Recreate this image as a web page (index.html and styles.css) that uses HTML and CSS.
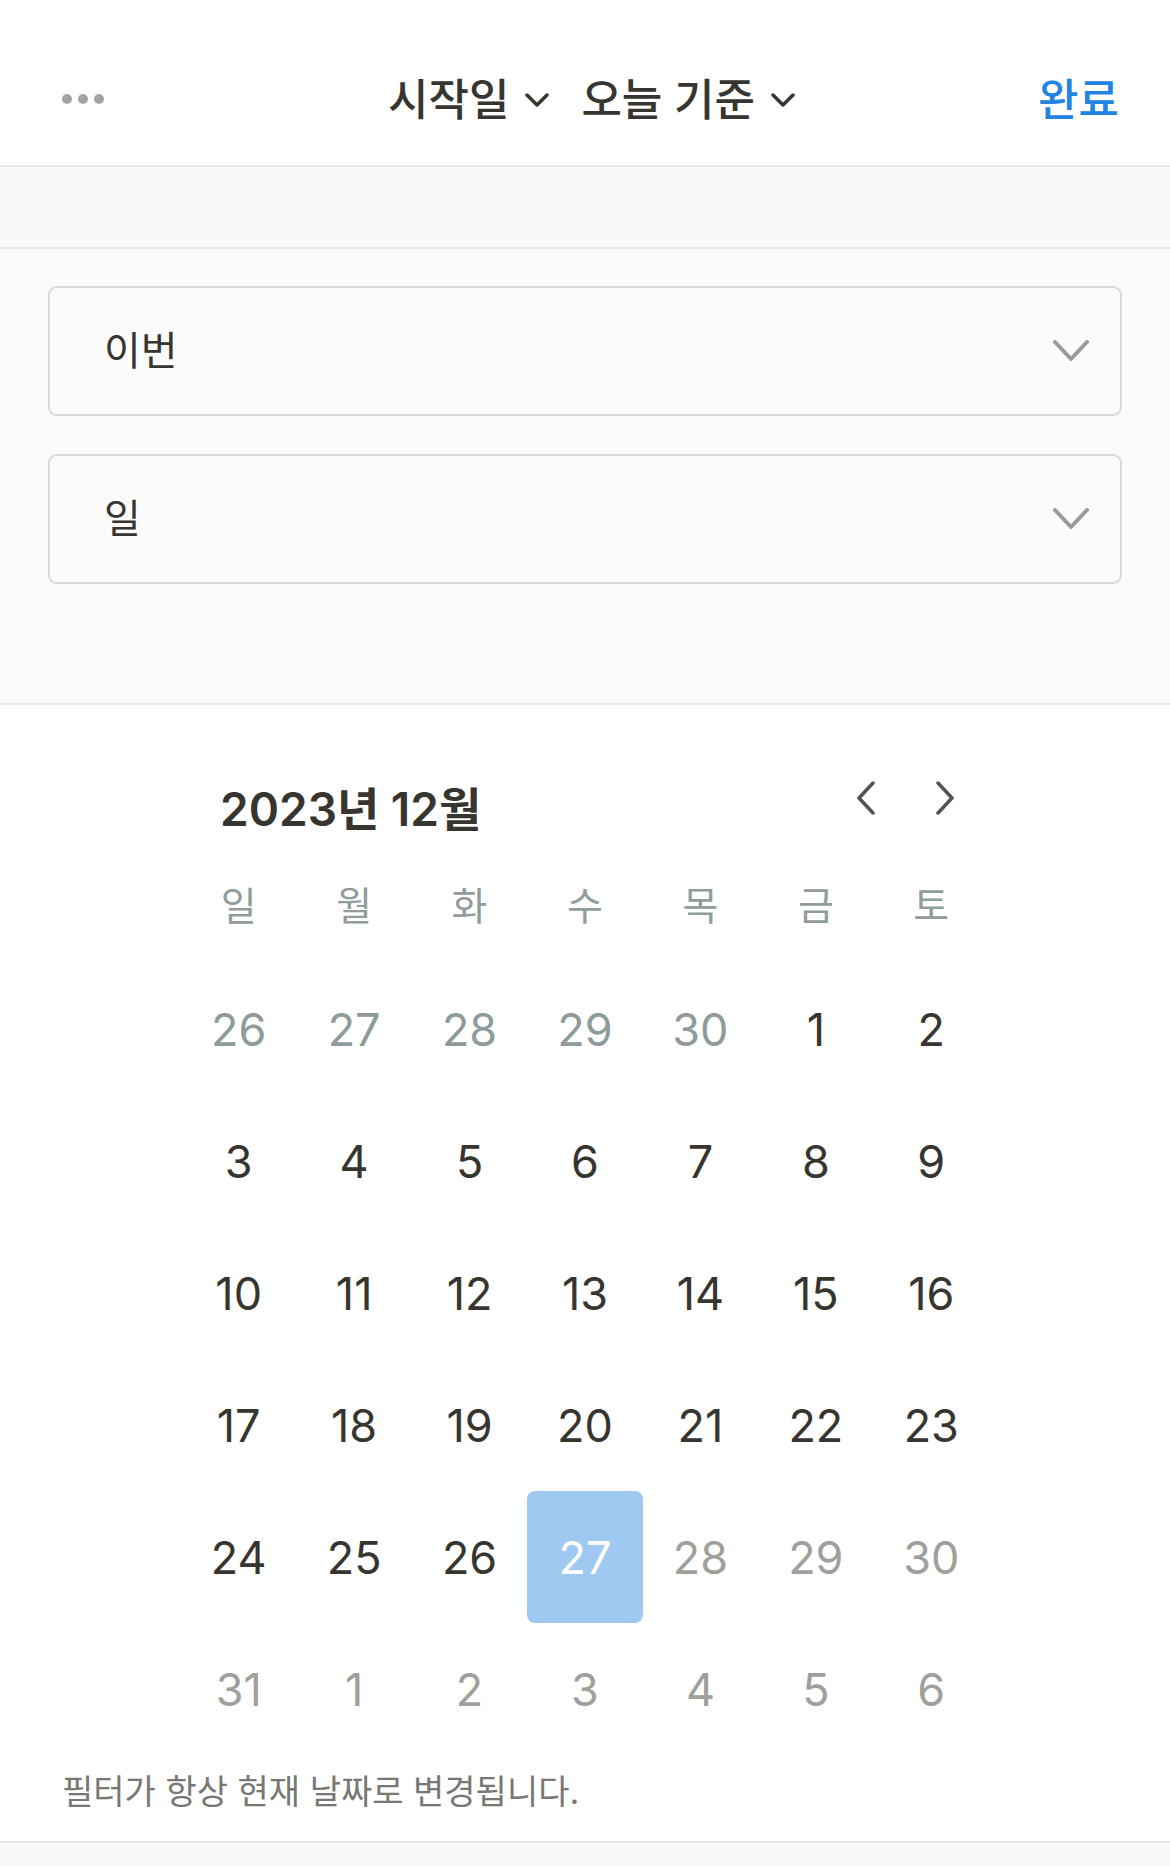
FILE: index.html
```html
<!DOCTYPE html>
<html lang="ko">
<head>
<meta charset="utf-8">
<title>시작일 필터</title>
<link rel="stylesheet" href="styles.css">
</head>
<body>
<div class="page">
  <header class="topbar">
    <div class="more" aria-label="더보기"><span></span><span></span><span></span></div>
    <div class="title">
      <span class="title-item">시작일<svg class="tchev" viewBox="0 0 24 14" width="24" height="14"><path d="M2 2 L12 12 L22 2"/></svg></span>
      <span class="title-item">오늘 기준<svg class="tchev" viewBox="0 0 24 14" width="24" height="14"><path d="M2 2 L12 12 L22 2"/></svg></span>
    </div>
    <div class="done">완료</div>
  </header>

  <div class="band"></div>

  <section class="selects">
    <div class="select">
      <span>이번</span>
      <svg class="schev" viewBox="0 0 36 22" width="36" height="22"><path d="M2 2 L18 19 L34 2"/></svg>
    </div>
    <div class="select">
      <span>일</span>
      <svg class="schev" viewBox="0 0 36 22" width="36" height="22"><path d="M2 2 L18 19 L34 2"/></svg>
    </div>
  </section>

  <section class="calendar">
    <div class="cal">
      <div class="cal-head">
        <div class="month">2023년 12월</div>
        <div class="nav">
          <svg viewBox="0 0 20 34" width="20" height="34"><path d="M17 2 L3 17 L17 32"/></svg>
          <svg viewBox="0 0 20 34" width="20" height="34"><path d="M3 2 L17 17 L3 32"/></svg>
        </div>
      </div>
      <div class="weekdays">
        <span>일</span><span>월</span><span>화</span><span>수</span><span>목</span><span>금</span><span>토</span>
      </div>
      <div class="days">
        <span class="prev">26</span><span class="prev">27</span><span class="prev">28</span><span class="prev">29</span><span class="prev">30</span><span>1</span><span>2</span>
        <span>3</span><span>4</span><span>5</span><span>6</span><span>7</span><span>8</span><span>9</span>
        <span>10</span><span>11</span><span>12</span><span>13</span><span>14</span><span>15</span><span>16</span>
        <span>17</span><span>18</span><span>19</span><span>20</span><span>21</span><span>22</span><span>23</span>
        <span>24</span><span>25</span><span>26</span><span class="sel">27</span><span class="next">28</span><span class="next">29</span><span class="next">30</span>
        <span class="next">31</span><span class="next">1</span><span class="next">2</span><span class="next">3</span><span class="next">4</span><span class="next">5</span><span class="next">6</span>
      </div>
    </div>
    <p class="note">필터가 항상 현재 날짜로 변경됩니다.</p>
  </section>

  <div class="bottom"></div>
</div>
</body>
</html>
```

FILE: styles.css
```css
html, body {
  margin: 0;
  padding: 0;
  background: #ffffff;
}
body {
  font-family: Inter, "Noto Sans CJK KR", sans-serif;
  color: #37352f;
}
.page {
  width: 1170px;
}

/* Top bar */
.topbar {
  box-sizing: border-box;
  height: 167px;
  padding: 35px 51px 0 62px;
  border-bottom: 2px solid #e9e9e7;
  display: grid;
  grid-template-columns: 1fr auto 1fr;
  align-items: center;
}
.more {
  display: flex;
  gap: 6px;
  justify-self: start;
  margin-top: -3px;
}
.more span {
  width: 10px;
  height: 10px;
  border-radius: 50%;
  background: #a5a4a0;
}
.title {
  display: flex;
  align-items: center;
  gap: 32px;
  font-size: 44px;
  font-weight: 500;
  line-height: 1;
  padding-left: 2px;
}
.title-item {
  display: flex;
  align-items: center;
  gap: 16px;
}
.tchev path {
  fill: none;
  stroke: #37352f;
  stroke-width: 3.5;
  stroke-linecap: round;
  stroke-linejoin: round;
}
.done {
  justify-self: end;
  font-size: 44px;
  font-weight: 500;
  color: #2383e2;
  line-height: 1;
}

/* Grey band */
.band {
  height: 80px;
  background: #f9f9f9;
  border-bottom: 2px solid #e9e9e7;
}

/* Selects */
.selects {
  background: #fafafa;
  padding: 37px 48px 119px;
  border-bottom: 2px solid #e9e9e7;
  display: flex;
  flex-direction: column;
  gap: 38px;
}
.select {
  box-sizing: border-box;
  height: 130px;
  border: 2px solid #dadada;
  border-radius: 9px;
  background: #fbfbfb;
  display: flex;
  align-items: center;
  justify-content: space-between;
  padding: 0 31px 0 54px;
  font-size: 40px;
  line-height: 1;
}
.schev path {
  fill: none;
  stroke: #9b9a97;
  stroke-width: 4;
  stroke-linecap: round;
  stroke-linejoin: round;
}

/* Calendar */
.calendar {
  padding: 74px 0 29px;
}
.cal {
  width: 808px;
  margin: 0 auto;
}
.cal-head {
  height: 60px;
  display: flex;
  align-items: center;
  justify-content: space-between;
  padding: 0 34px 0 39px;
}
.month {
  font-size: 46px;
  font-weight: 600;
  line-height: 1;
}
.nav {
  display: flex;
  gap: 59px;
  margin-top: -22px;
}
.nav path {
  fill: none;
  stroke: #55534e;
  stroke-width: 3.5;
  stroke-linecap: round;
  stroke-linejoin: round;
}
.weekdays {
  margin-top: 36px;
  height: 60px;
  display: grid;
  grid-template-columns: repeat(7, 1fr);
  align-items: center;
  text-align: center;
  font-size: 39px;
  line-height: 1;
  color: #919c9c;
}
.days {
  margin-top: 28px;
  display: grid;
  grid-template-columns: repeat(7, 1fr);
  grid-auto-rows: 132px;
}
.days span {
  display: flex;
  align-items: center;
  justify-content: center;
  font-size: 45px;
  line-height: 1;
  color: #37352f;
}
.days .prev {
  color: #8f9a9a;
}
.days .next {
  color: #a09f9b;
}
.days .sel {
  background: #a0c9f1;
  color: #ffffff;
  border-radius: 8px;
}
.note {
  margin: 17px 0 0;
  padding-left: 62px;
  font-size: 34px;
  line-height: 40px;
  color: #787774;
}
.bottom {
  height: 23px;
  background: #f9f9f9;
  border-top: 2px solid #e9e9e7;
}
```
